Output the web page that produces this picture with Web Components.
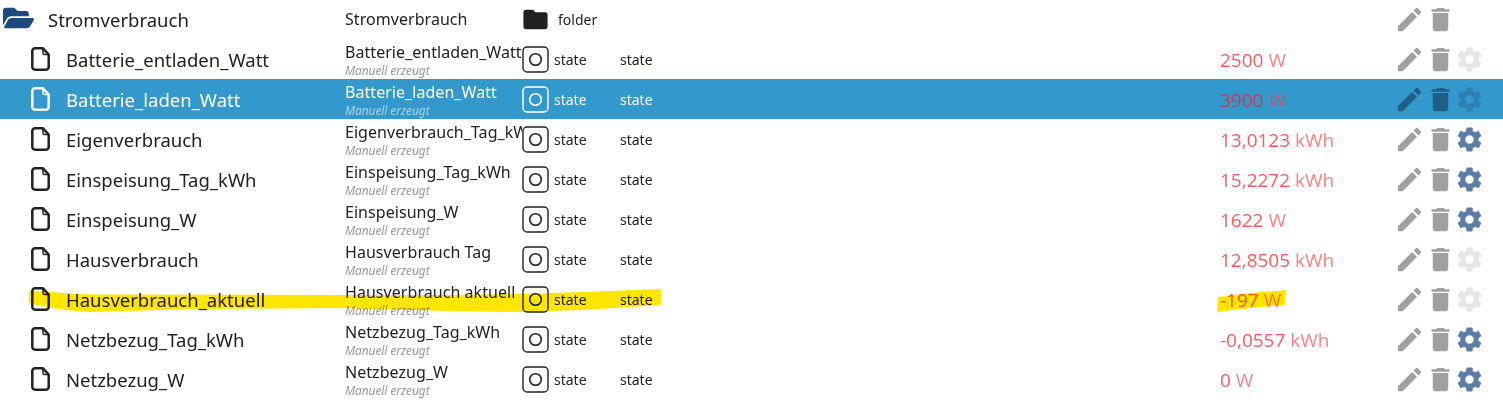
<!DOCTYPE html>
<html>
<head>
<meta charset="utf-8">
<style>
  html, body { margin: 0; background: #fff; }
  body { font-family: "Noto Sans", "Open Sans", sans-serif; color: #222; position: relative; overflow: hidden; height: 400px; }
  obj-row:first-of-type { margin-top: -1px; }
</style>
</head>
<body>
<template id="obj-row-tpl">
  <style>
    :host {
      display: grid;
      grid-template-columns: 345px 177px 32px 66px 600px 174px 1fr;
      align-items: center;
      height: 40px;
      box-sizing: border-box;
      color: #222;
    }
    :host([selected]) { background: #3399cc; color: #fff; }
    .name { display: flex; align-items: center; font-size: 18.5px; white-space: nowrap; padding-left: 31px; }
    .name svg { flex: none; margin-right: 16px; }
    :host([kind="folder"]) .name { padding-left: 3px; }
    :host([kind="folder"]) .name svg { margin-right: 14px; margin-top: -2px; }
    .title { display: flex; flex-direction: column; overflow: hidden; white-space: nowrap; font-size: 16px; letter-spacing: 0.05px; line-height: 20px; padding-top: 2px; }
    :host([kind="folder"]) .title { padding-top: 0; }
    .sub { font-size: 12px; line-height: 14px; font-style: italic; color: #999; letter-spacing: -0.1px; margin-top: 2px; }
    :host([selected]) .sub { color: #a5d3ea; }
    :host([kind="folder"]) .sub { display: none; }
    .icon { display: flex; align-items: center; padding-top: 1px; }
    .type, .role { font-size: 14px; }
    :host([kind="folder"]) .type { padding-left: 4px; }
    :host([kind="folder"]) .icon { padding-top: 0; }
    .value { font-family: "Open Sans", sans-serif; font-size: 19px; color: #ff5b5f; white-space: nowrap; padding-top: 1px; }
    :host([selected]) .value { color: #c43c55; }
    .unit { color: #ff8285; }
    :host([selected]) .unit { color: #b95a75; }
    .actions { display: flex; align-items: center; }
    .actions svg { flex: none; fill: #a0a0a0; }
    .actions .gear { fill: #e6e6e6; margin-left: -1px; }
    :host([settings]) .actions .gear { fill: #5a7ea6; }
    :host([selected]) .actions svg { fill: #1f5f87; }
    :host([selected]) .actions .gear { fill: #2c80b3; }
  </style>
  <div class="name"><span id="nameicon"></span><slot></slot></div>
  <div class="title"><slot name="title"></slot><span class="sub">Manuell erzeugt</span></div>
  <div class="icon"></div>
  <div class="type"></div>
  <div class="role"></div>
  <div class="value"><slot name="value"></slot> <span class="unit"></span></div>
  <div class="actions"></div>
</template>

<obj-row kind="folder">Stromverbrauch<span slot="title">Stromverbrauch</span></obj-row>
<obj-row kind="state" unit="W">Batterie_entladen_Watt<span slot="title">Batterie_entladen_Watt</span><span slot="value">2500</span></obj-row>
<obj-row kind="state" unit="W" selected>Batterie_laden_Watt<span slot="title">Batterie_laden_Watt</span><span slot="value">3900</span></obj-row>
<obj-row kind="state" unit="kWh" settings>Eigenverbrauch<span slot="title">Eigenverbrauch_Tag_kWh</span><span slot="value">13,0123</span></obj-row>
<obj-row kind="state" unit="kWh" settings>Einspeisung_Tag_kWh<span slot="title">Einspeisung_Tag_kWh</span><span slot="value">15,2272</span></obj-row>
<obj-row kind="state" unit="W" settings>Einspeisung_W<span slot="title">Einspeisung_W</span><span slot="value">1622</span></obj-row>
<obj-row kind="state" unit="kWh">Hausverbrauch<span slot="title">Hausverbrauch Tag</span><span slot="value">12,8505</span></obj-row>
<obj-row kind="state" unit="W">Hausverbrauch_aktuell<span slot="title">Hausverbrauch aktuell</span><span slot="value">-197</span></obj-row>
<obj-row kind="state" unit="kWh" settings>Netzbezug_Tag_kWh<span slot="title">Netzbezug_Tag_kWh</span><span slot="value">-0,0557</span></obj-row>
<obj-row kind="state" unit="W" settings>Netzbezug_W<span slot="title">Netzbezug_W</span><span slot="value">0</span></obj-row>

<marker-stroke></marker-stroke>

<script>
'use strict';

(function() {
  const ICONS = {
    folderOpen: `<svg width="31" height="28" viewBox="0 0 576 512" fill="#1b4a80"><path d="M572.694 292.093L500.27 416.248A63.997 63.997 0 0 1 444.989 448H45.025c-18.523 0-30.064-20.093-20.731-36.093l72.424-124.155A64 64 0 0 1 152 256h399.964c18.523 0 30.064 20.093 20.73 36.093zM152 224h328v-48c0-26.51-21.49-48-48-48H272l-64-64H48C21.49 64 0 85.49 0 112v278.046l69.077-118.418C86.214 242.25 117.989 224 152 224z"/></svg>`,
    file: `<svg width="19" height="24" viewBox="0 0 19 24" fill="none" stroke="currentColor" stroke-width="2.5" stroke-linejoin="round"><path d="M4 1.3H12L17.7 7.5V20a2.7 2.7 0 0 1-2.7 2.7H4A2.7 2.7 0 0 1 1.3 20V4A2.7 2.7 0 0 1 4 1.3Z"/><path d="M12 1.3V6a1.5 1.5 0 0 0 1.5 1.5h4.2" stroke-width="1.5"/></svg>`,
    folder: `<svg width="29" height="29" viewBox="0 0 24 24" fill="currentColor" style="margin-left:-1px"><path d="M10 4H4c-1.1 0-1.99.9-1.99 2L2 18c0 1.1.9 2 2 2h16c1.1 0 2-.9 2-2V8c0-1.1-.9-2-2-2h-8l-2-2z"/></svg>`,
    state: `<svg width="27" height="27" viewBox="0 0 27 27" fill="none" stroke="currentColor"><rect x="1" y="1" width="25" height="25" rx="4" stroke-width="1.4"/><circle cx="13.5" cy="13.5" r="5.8" stroke-width="1.6"/></svg>`,
    edit: `<svg width="31" height="31" viewBox="0 0 24 24"><path d="M3 17.25V21h3.75L17.81 9.94l-3.75-3.75L3 17.25zM20.71 7.04c.39-.39.39-1.02 0-1.41l-2.34-2.34c-.39-.39-1.02-.39-1.41 0l-1.83 1.83 3.75 3.75 1.83-1.83z"/></svg>`,
    trash: `<svg width="31" height="31" viewBox="0 0 24 24"><path d="M6 19c0 1.1.9 2 2 2h8c1.1 0 2-.9 2-2V7H6v12zM19 4h-3.5l-1-1h-5l-1 1H5v2h14V4z"/></svg>`,
    gear: `<svg class="gear" width="29" height="29" viewBox="0 0 24 24"><path d="M19.43 12.98c.04-.32.07-.64.07-.98s-.03-.66-.07-.98l2.11-1.65c.19-.15.24-.42.12-.64l-2-3.46c-.12-.22-.39-.3-.61-.22l-2.49 1c-.52-.4-1.08-.73-1.69-.98l-.38-2.65C14.46 2.18 14.25 2 14 2h-4c-.25 0-.46.18-.49.42l-.38 2.65c-.61.25-1.17.59-1.69.98l-2.49-1c-.23-.09-.49 0-.61.22l-2 3.46c-.13.22-.07.49.12.64l2.11 1.65c-.04.32-.07.65-.07.98s.03.66.07.98l-2.11 1.65c-.19.15-.24.42-.12.64l2 3.46c.12.22.39.3.61.22l2.49-1c.52.4 1.08.73 1.69.98l.38 2.65c.03.24.24.42.49.42h4c.25 0 .46-.18.49-.42l.38-2.65c.61-.25 1.17-.59 1.69-.98l2.49 1c.23.09.49 0 .61-.22l2-3.46c.12-.22.07-.49-.12-.64l-2.11-1.65zM12 15.5c-1.93 0-3.5-1.57-3.5-3.5s1.57-3.5 3.5-3.5 3.5 1.57 3.5 3.5-1.57 3.5-3.5 3.5z"/></svg>`
  };

  class ObjRow extends HTMLElement {
    constructor() {
      super();
      const shadow = this.attachShadow({ mode: 'open' });
      shadow.appendChild(document.getElementById('obj-row-tpl').content.cloneNode(true));
    }

    connectedCallback() {
      const shadow = this.shadowRoot;
      const isFolder = this.getAttribute('kind') === 'folder';
      shadow.querySelector('#nameicon').outerHTML = isFolder ? ICONS.folderOpen : ICONS.file;
      shadow.querySelector('.icon').innerHTML = isFolder ? ICONS.folder : ICONS.state;
      shadow.querySelector('.type').textContent = isFolder ? 'folder' : 'state';
      shadow.querySelector('.role').textContent = isFolder ? '' : 'state';
      shadow.querySelector('.unit').textContent = this.getAttribute('unit') || '';
      // folder row has no settings gear
      shadow.querySelector('.actions').innerHTML = ICONS.edit + ICONS.trash + (isFolder ? '' : ICONS.gear);
    }
  }

  // yellow highlighter marks drawn over the list
  class MarkerStroke extends HTMLElement {
    constructor() {
      super();
      const shadow = this.attachShadow({ mode: 'open' });
      shadow.innerHTML = `
        <style>
          :host { position: absolute; left: 0; top: 0; width: 1503px; height: 400px; mix-blend-mode: multiply; pointer-events: none; }
          svg { display: block; filter: blur(0.5px); }
        </style>
        <svg width="1503" height="400" viewBox="0 0 1503 400" fill="#ffe600">
          <path d="M29 291C45 291 70 294 90 294.5L340 295L448 295L520 294L583 292L661 289L661 305L583 310L520 312L448 311L340 308L200 309L90 312C65 311 45 307 29 303Z"/>
          <path d="M1218 297L1250 293L1286 290L1285 305L1250 308L1217 312Z"/>
        </svg>
      `;
    }
  }

  customElements.define('obj-row', ObjRow);
  customElements.define('marker-stroke', MarkerStroke);
})();
</script>
</body>
</html>
